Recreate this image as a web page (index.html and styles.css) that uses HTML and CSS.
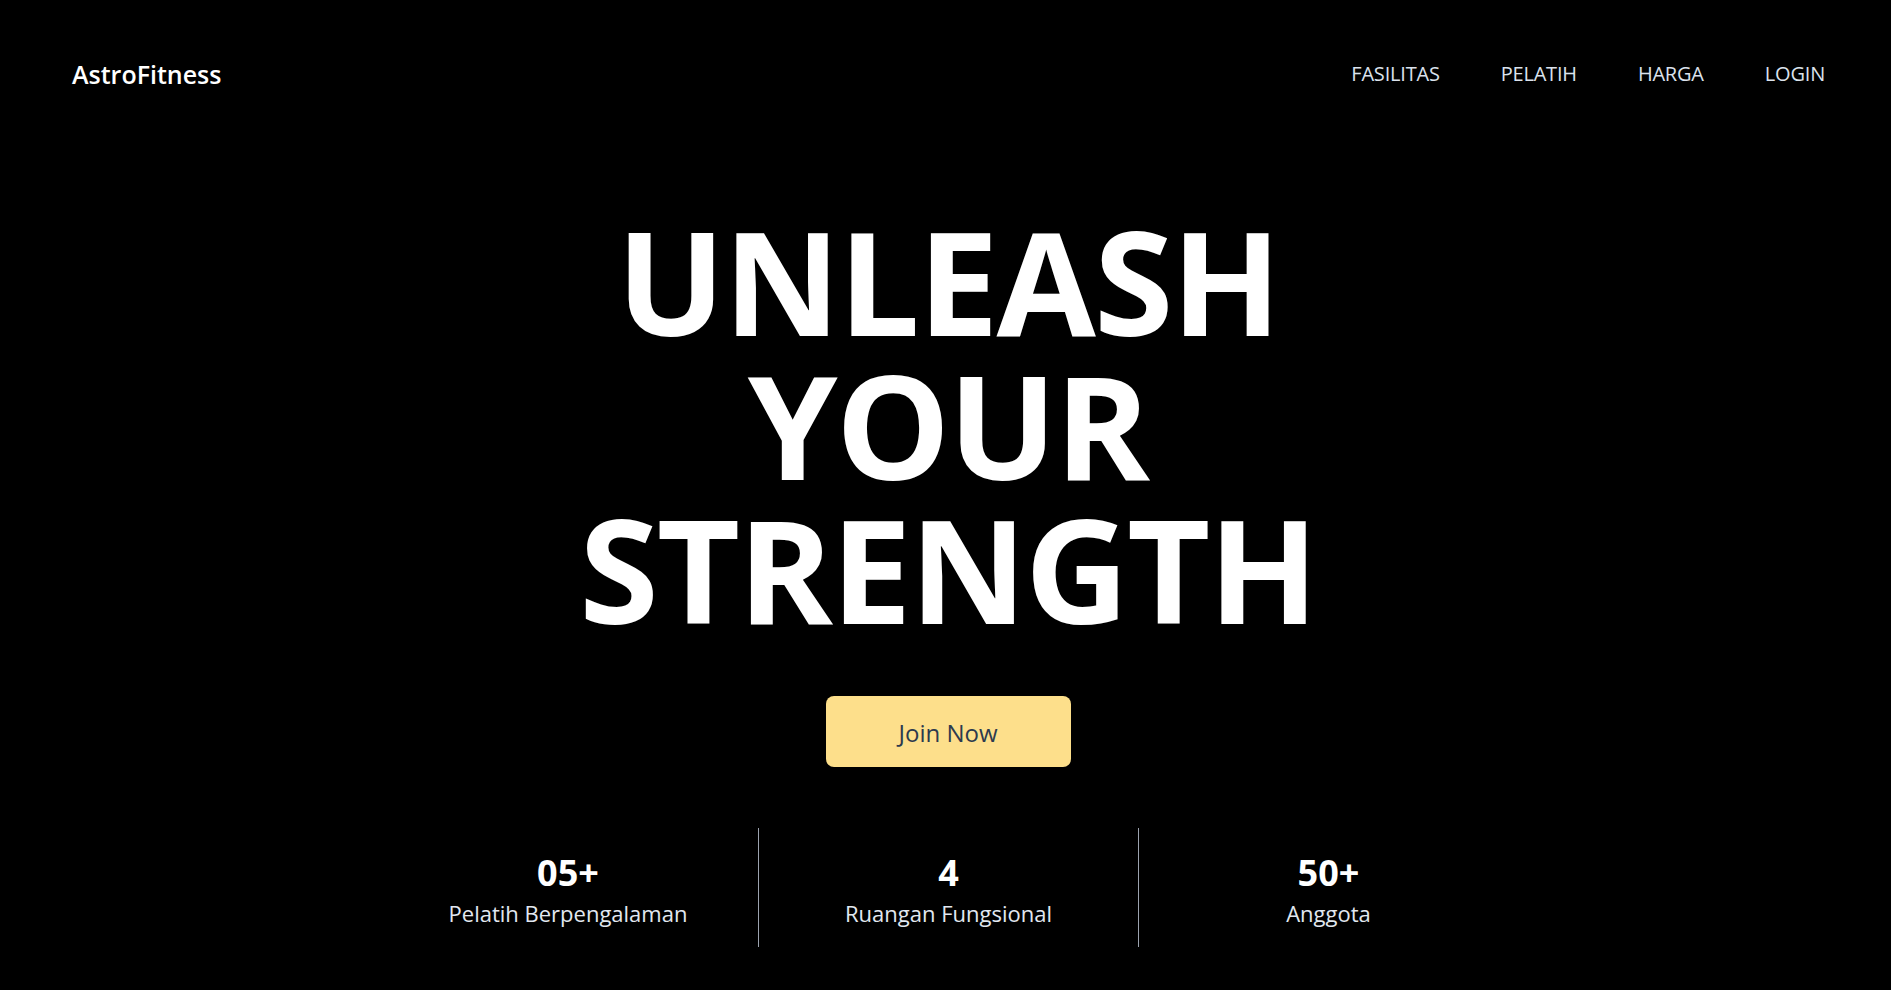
FILE: index.html
```html
<!DOCTYPE html>
<html lang="id">
<head>
<meta charset="utf-8">
<title>AstroFitness</title>
<link rel="stylesheet" href="styles.css">
</head>
<body>
<header class="site-header">
  <a class="logo" href="#">AstroFitness</a>
  <nav class="nav">
    <a href="#" class="nav-link">FASILITAS</a>
    <a href="#" class="nav-link">PELATIH</a>
    <a href="#" class="nav-link">HARGA</a>
    <a href="#" class="nav-link">LOGIN</a>
  </nav>
</header>
<main class="hero">
  <h1 class="hero-title">UNLEASH<br>YOUR<br>STRENGTH</h1>
  <a href="#" class="btn-join">Join Now</a>
  <section class="stats">
    <div class="stat">
      <div class="stat-num">05+</div>
      <div class="stat-label">Pelatih Berpengalaman</div>
    </div>
    <div class="stat">
      <div class="stat-num">4</div>
      <div class="stat-label">Ruangan Fungsional</div>
    </div>
    <div class="stat">
      <div class="stat-num">50+</div>
      <div class="stat-label">Anggota</div>
    </div>
  </section>
</main>
</body>
</html>
```

FILE: styles.css
```css
* { box-sizing: border-box; }
html, body {
  margin: 0;
  padding: 0;
  background: #000;
  color: #fff;
  font-family: "Open Sans", "Noto Sans", sans-serif;
}
body { min-height: 990px; }
a { text-decoration: none; color: inherit; }

.site-header {
  display: flex;
  align-items: center;
  justify-content: space-between;
  padding: 56px 66px 56px 72px;
}
.logo {
  font-size: 25px;
  line-height: 36px;
  font-weight: 600;
  color: #fff;
}
.nav {
  display: flex;
  align-items: center;
  gap: 61px;
}
.nav-link {
  font-size: 20px;
  line-height: 28px;
  color: #dbe2ec;
  letter-spacing: -0.2px;
}

.hero {
  display: flex;
  flex-direction: column;
  align-items: center;
  padding-left: 5px;
}
.hero-title {
  margin: 60px 0 0;
  font-size: 144px;
  line-height: 144px;
  font-weight: 700;
  text-align: center;
  letter-spacing: -2px;
  color: #fff;
}
.btn-join {
  margin-top: 56px;
  width: 245px;
  height: 71px;
  display: flex;
  align-items: center;
  justify-content: center;
  background: #fddf8b;
  color: #2d3a4e;
  border-radius: 8px;
  font-size: 24px;
  font-weight: 500;
  padding-top: 2px;
}

.stats {
  margin-top: 61px;
  width: 1140px;
  display: grid;
  grid-template-columns: repeat(3, 1fr);
}
.stat {
  height: 119px;
  padding-top: 24px;
  display: flex;
  flex-direction: column;
  align-items: center;
  gap: 3px;
}
.stat + .stat { border-left: 1px solid #9ca3af; }
.stat-num {
  font-size: 36px;
  line-height: 42px;
  font-weight: 700;
  color: #fff;
}
.stat-label {
  font-size: 22px;
  line-height: 32px;
  color: #e2e8f0;
}
```
